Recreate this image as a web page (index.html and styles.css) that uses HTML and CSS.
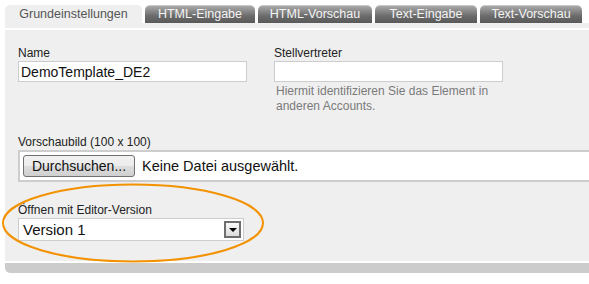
FILE: index.html
```html
<!DOCTYPE html>
<html lang="de">
<head>
    <meta charset="UTF-8">
    <meta name="viewport" content="width=device-width, initial-scale=1.0">
    <title>Template bearbeiten</title>
    <link rel="stylesheet" href="styles.css">
</head>
<body>
    <div id="editor">
        <ul class="tabs">
            <li class="tab active">Grundeinstellungen</li>
            <li class="tab">HTML-Eingabe</li>
            <li class="tab">HTML-Vorschau</li>
            <li class="tab">Text-Eingabe</li>
            <li class="tab">Text-Vorschau</li>
        </ul>
        <div class="tab-strip"></div>

        <div class="panel">
            <div class="row">
                <div class="field">
                    <label for="nameInput">Name</label>
                    <input type="text" id="nameInput" class="text-input" value="DemoTemplate_DE2">
                </div>
                <div class="field">
                    <label for="deputyInput">Stellvertreter</label>
                    <input type="text" id="deputyInput" class="text-input">
                    <p class="hint">Hiermit identifizieren Sie das Element in anderen Accounts.</p>
                </div>
            </div>

            <div class="field preview">
                <label>Vorschaubild (100 x 100)</label>
                <div class="file-box">
                    <span class="file-button">Durchsuchen...</span>
                    <span class="file-name">Keine Datei ausgewählt.</span>
                </div>
            </div>

            <div class="field version">
                <label for="versionSelect">Öffnen mit Editor-Version</label>
                <div class="select-box" id="versionSelect">
                    <span class="select-value">Version 1</span>
                    <span class="select-arrow"></span>
                </div>
            </div>
        </div>

        <div class="panel-footer"></div>

        <!-- Markierung um die Editor-Version -->
        <svg class="highlight" width="270" height="84" viewBox="0 0 270 84">
            <ellipse cx="134" cy="41" rx="130" ry="38.5" fill="none" stroke="#f39200" stroke-width="2"/>
        </svg>
    </div>
</body>
</html>
```

FILE: styles.css
```css
body {
    font-family: 'Liberation Sans', Arial, sans-serif;
    background-color: #fff;
    margin: 0;
    padding: 0;
    overflow: hidden;
}

#editor {
    position: relative;
    width: 589px;
}

.tabs {
    list-style: none;
    margin: 0;
    padding: 5px 0 0 5px;
    display: flex;
    gap: 3px;
}

.tab {
    box-sizing: border-box;
    height: 18px;
    line-height: 17px;
    font-size: 12.5px;
    white-space: nowrap;
    color: #f4f4f4;
    border-radius: 5px 5px 0 0;
    background: linear-gradient(#a8a8a8, #6a6a6a 60%, #595959);
    border-top: 1px solid #c8c8c8;
    text-align: center;
}

.tab:nth-child(2) { width: 110px; }
.tab:nth-child(3) { width: 114px; }
.tab:nth-child(4) { width: 102px; }
.tab:nth-child(5) { width: 102px; }

.tab.active {
    width: 137px;
    color: #555;
    background: #efefef;
    border-top-color: #efefef;
}

.tab-strip {
    margin-left: 5px;
    height: 5px;
    background-color: #efefef;
    border-bottom: 2px solid #fff;
}

.panel {
    margin-left: 5px;
    background-color: #efefef;
    padding: 16px 0 20px 13px;
}

.row {
    display: flex;
    gap: 27px;
}

.field label {
    display: block;
    font-size: 12px;
    line-height: 15px;
    color: #222;
}

.text-input {
    display: block;
    box-sizing: border-box;
    width: 229px;
    height: 21px;
    margin: 0;
    padding: 0 2px;
    border: 1px solid #cdcdcd;
    background-color: #fff;
    font-family: inherit;
    font-size: 14px;
    color: #111;
    outline: none;
}

.hint {
    margin: 2px 0 0 2px;
    width: 240px;
    font-size: 12px;
    line-height: 15px;
    color: #7a7a7a;
}

.preview {
    margin-top: 21px;
}

.file-box {
    box-sizing: border-box;
    width: 590px;
    height: 32px;
    border: 2px solid #cdcdcd;
    background-color: #fff;
    padding: 3px;
    display: flex;
    align-items: center;
    gap: 7px;
}

.file-button {
    box-sizing: border-box;
    width: 112px;
    height: 22px;
    line-height: 20px;
    text-align: center;
    font-size: 14px;
    color: #111;
    border: 1px solid #707070;
    border-radius: 3px;
    background: linear-gradient(#f2f2f2, #ebebeb 50%, #dddddd 51%, #cfcfcf);
}

.file-name {
    font-size: 14.5px;
    color: #111;
}

.version {
    margin-top: 21px;
}

.select-box {
    box-sizing: border-box;
    width: 226px;
    height: 23px;
    border: 1px solid #cdcdcd;
    background-color: #fff;
    display: flex;
    align-items: center;
    justify-content: space-between;
    padding: 0 2px 0 4px;
}

.select-value {
    font-size: 15px;
    color: #111;
}

.select-arrow {
    position: relative;
    box-sizing: border-box;
    width: 17px;
    height: 17px;
    border: 2px solid #6e6e6e;
    background: linear-gradient(#fafafa, #dcdcdc);
}

.select-arrow::after {
    content: '';
    position: absolute;
    left: 3px;
    top: 5px;
    border-left: 4px solid transparent;
    border-right: 4px solid transparent;
    border-top: 4px solid #000;
}

.panel-footer {
    margin: 2px 0 0 5px;
    height: 10px;
    background-color: #cccccc;
    border-radius: 0 0 0 5px;
}

.highlight {
    position: absolute;
    left: -1px;
    top: 182px;
}
```
